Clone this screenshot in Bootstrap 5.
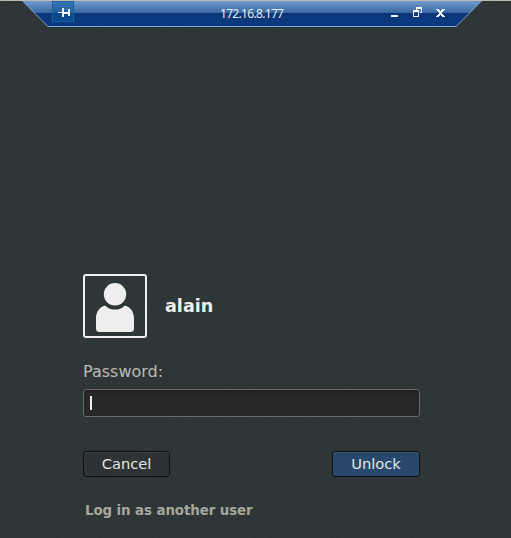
<!DOCTYPE html>
<html lang="en">
<head>
<meta charset="utf-8">
<meta name="viewport" content="width=device-width, initial-scale=1">
<title>172.16.8.177</title>
<link href="https://cdn.jsdelivr.net/npm/bootstrap@5.3.0/dist/css/bootstrap.min.css" rel="stylesheet">
<style>
body{height:538px;background:#293133;font-family:"DejaVu Sans",sans-serif;font-size:16px;line-height:20px;border-top:1px solid #bdbbb0}
.grain{inset:0;width:100%;height:100%;opacity:.07;z-index:0;pointer-events:none}
.conn-bar{width:460px;height:26px;margin-left:22px;background:#7fa3d6;clip-path:polygon(0 0,100% 0,434px 100%,26px 100%);z-index:1}
.conn-fill{height:25px;background:linear-gradient(#6f9bcb 0,#3d6ca6 11px,#31609b 12px,#0b3779 12px,#0b3a7f 100%);clip-path:polygon(1px 0,459px 0,434px 100%,26px 100%);color:#e9edf5;font-family:"Noto Sans","Open Sans",sans-serif;font-size:12px}
.pin{width:22px;height:21px;margin-left:30px;border:1px solid #1560ab;background:rgba(12,86,158,.5)}
.host{width:64px;margin-left:146px;line-height:26px;letter-spacing:-.68px;white-space:nowrap}
.controls{margin-left:102px;width:72px;height:22px}
.unlock-form{width:337px;margin:247px 0 0 83px;z-index:1}
.avatar{width:64px;height:64px;border:2px solid #eeeeec;border-radius:3px}
.user-name{font-size:17.6px;color:#eeeeec;margin-left:18px}
.pw-label{color:#babdb6;margin-top:24px;line-height:20px}
.entry{height:28px;margin-top:7px;padding-left:6px;background:#282828;border:1px solid #6c6d68;border-radius:3px;box-shadow:inset 0 2px 2px #1f2020}
.caret{width:2px;height:14px;background:#eeeeec}
.actions{margin-top:34px}
.actions .btn{height:26px;padding:0 0 1px;font-size:14.67px;line-height:23px;color:#e3e5e1;border:1px solid #0d1011;border-radius:3px;background:#2e3436;box-shadow:inset 0 1px #3d4345}
.actions .btn-cancel{width:87px}
.actions .btn-unlock{width:88px;background:#28496b;box-shadow:inset 0 1px #3b5872}
.other-user{font-size:13.33px;line-height:18px;letter-spacing:-.06px;color:#a6a79c;margin:25px 0 0 2px}
</style>
<script src="https://cdn.jsdelivr.net/npm/bootstrap@5.3.0/dist/js/bootstrap.bundle.min.js"></script>
</head>
<body class="overflow-hidden position-relative">
<svg class="grain position-absolute" aria-hidden="true"><filter id="n"><feTurbulence type="fractalNoise" baseFrequency=".6" numOctaves="2" seed="4"/><feColorMatrix type="saturate" values="0"/></filter><rect width="100%" height="100%" filter="url(#n)"/></svg>
<header class="conn-bar position-relative">
  <div class="conn-fill d-flex align-items-start">
    <div class="pin flex-shrink-0"><svg class="d-block" width="20" height="19" shape-rendering="crispEdges"><path d="M5 10h4v1H5zM9 6h2v9H9zM11 10h4v2h-4zM15 7h2v7h-2z" fill="#f0f2f4"/></svg></div>
    <div class="host flex-shrink-0">172.16.8.177</div>
    <svg class="controls flex-shrink-0" shape-rendering="crispEdges"><g fill="#f0f2f4"><path d="M5 14h7v2H5z"/><path d="M30 6h6v6h-2v-1h1V8h-4v1h-1zM27 9h6v7h-6zm1 2v4h4v-4z" fill-rule="evenodd"/><path d="M50 8h3v1h1v1h1V9h1V8h3v1h-1v1h-1v1h-1v2h1v1h1v1h1v1h-3v-1h-1v-1h-1v1h-1v1h-3v-1h1v-1h1v-1h1v-2h-1v-1h-1V9h-1z"/></g></svg>
  </div>
</header>
<main class="unlock-form position-relative">
  <div class="d-flex align-items-center">
    <div class="avatar"><svg class="d-block" width="60" height="60"><g fill="#eeeeec"><circle cx="30" cy="18.3" r="11.2"/><path d="M20.5 29.7c5 5.2 14 5.2 19 0C45 30 49 36 49 42v10.500q0 3.500-3.500 3.500h-31q-3.500 0-3.500-3.500V42c0-6 4-12 9.500-12.300z"/></g></svg></div>
    <div class="user-name fw-bold">alain</div>
  </div>
  <div class="pw-label">Password:</div>
  <div class="entry d-flex align-items-center" role="textbox" aria-label="Password"><span class="caret"></span></div>
  <div class="actions d-flex justify-content-between">
    <button type="button" class="btn btn-cancel">Cancel</button>
    <button type="button" class="btn btn-unlock">Unlock</button>
  </div>
  <div class="other-user fw-bold">Log in as another user</div>
</main>
</body>
</html>
